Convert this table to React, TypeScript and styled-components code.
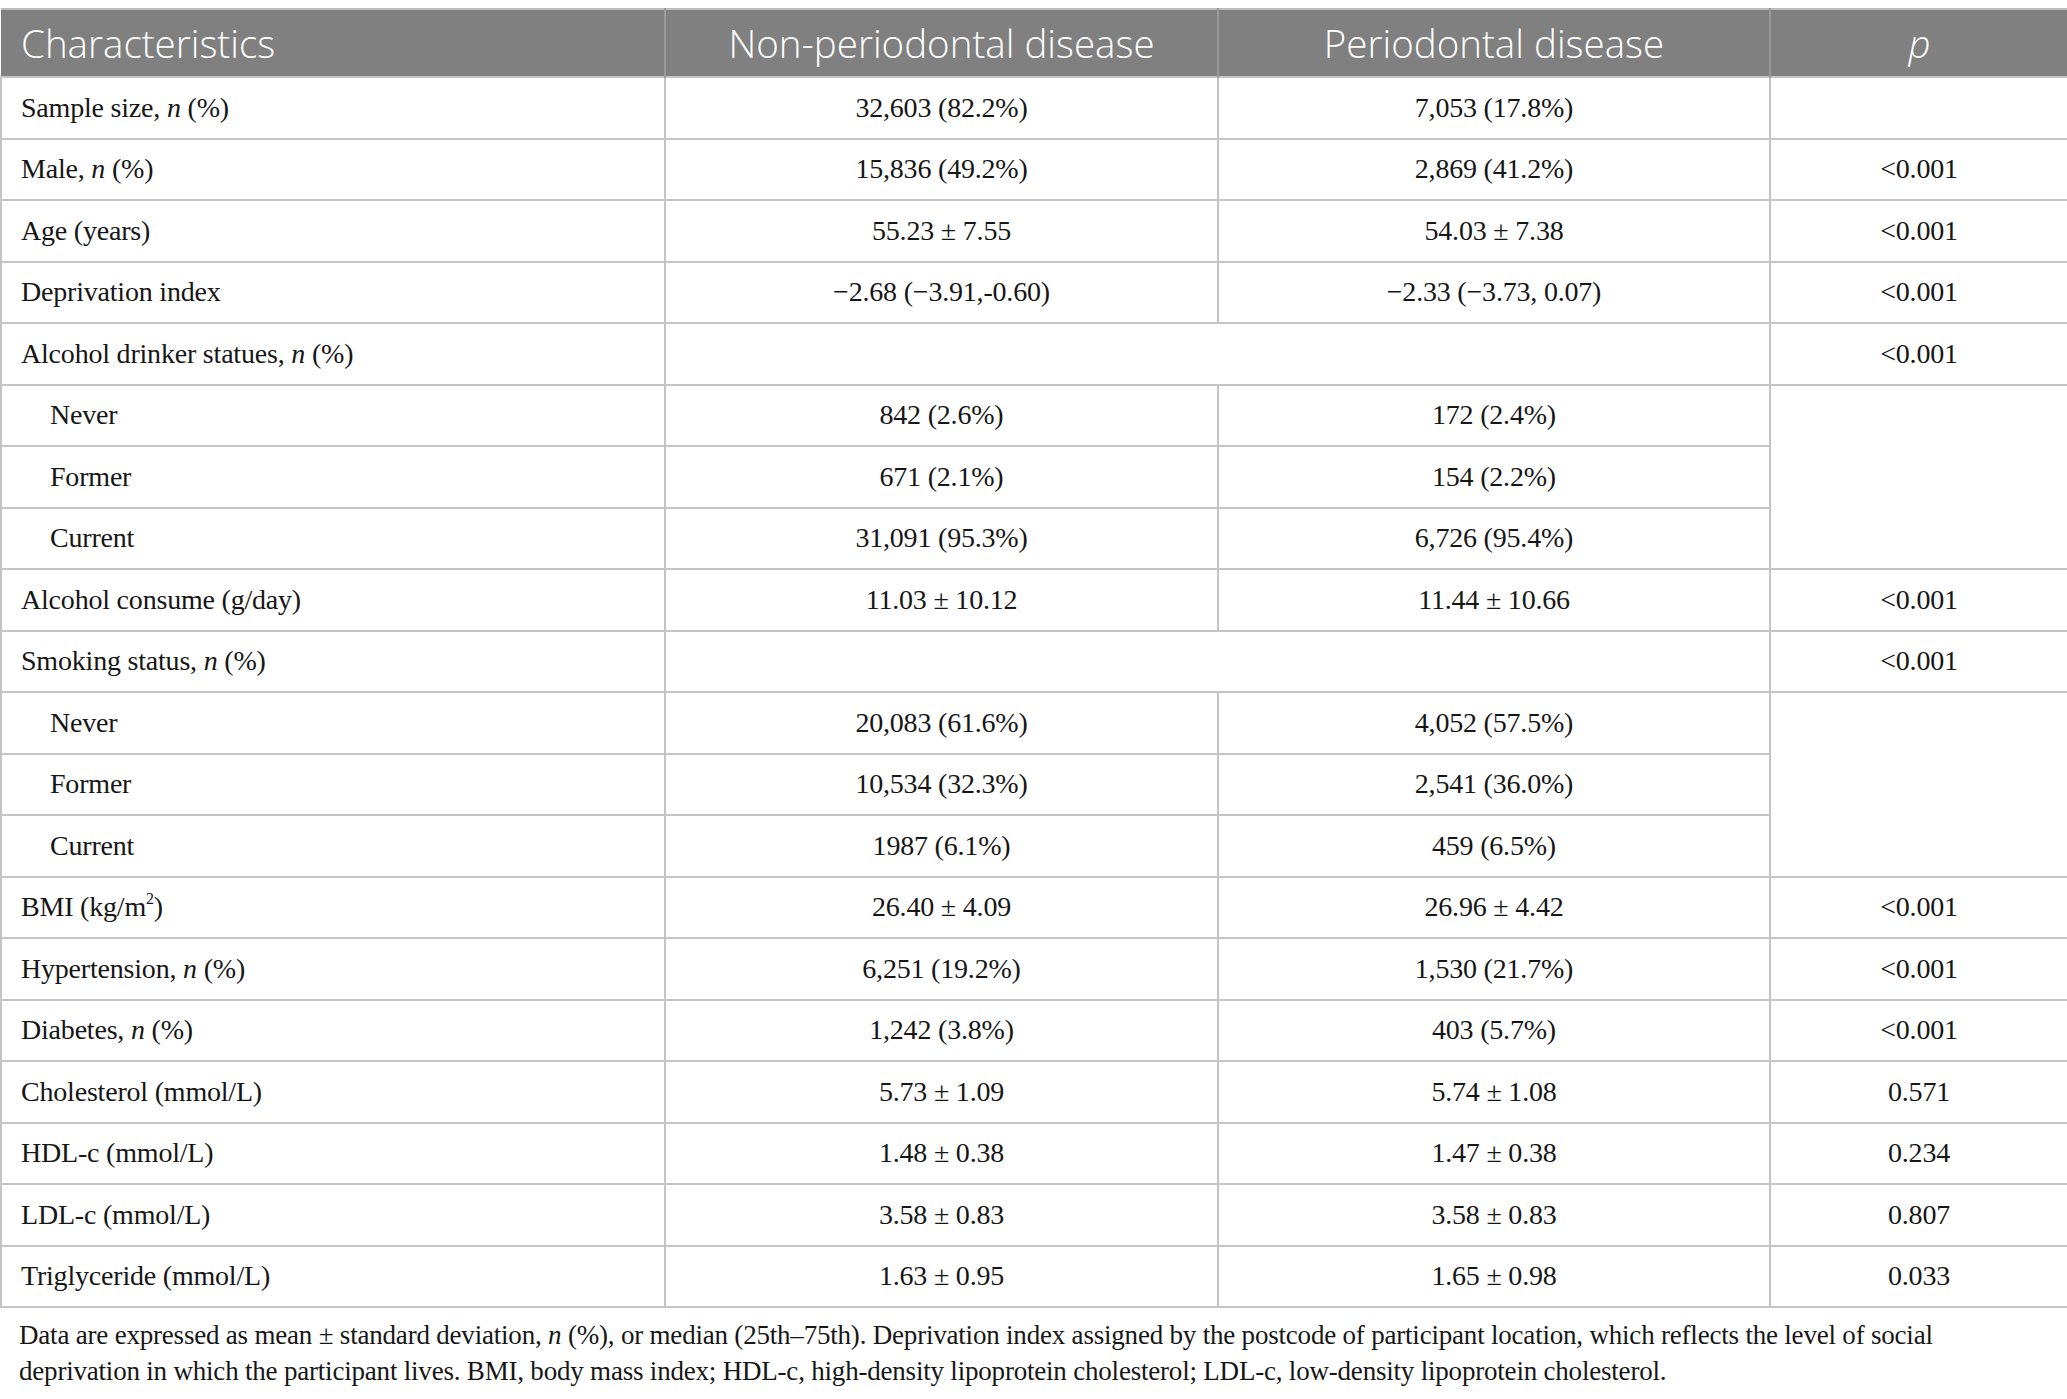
import React from 'react';
import styled, { createGlobalStyle } from 'styled-components';

const GlobalStyle = createGlobalStyle`
  html, body {
    margin: 0;
    padding: 0;
    background: #ffffff;
    overflow: hidden;
  }
`;

const Page = styled.div`
  width: 2067px;
  padding-top: 8px;
  font-family: 'Liberation Serif', 'Times New Roman', serif;
  color: #161616;
`;

const Table = styled.table`
  width: 2067px;
  border-collapse: collapse;
  table-layout: fixed;
  border-top: 2px solid #bdbdbd;
  border-bottom: 2px solid #bdbdbd;
`;

const HeadCell = styled.th<{ $align?: 'left' | 'center' }>`
  height: 66px;
  padding: 0 20px;
  background: #7f807f;
  color: #ffffff;
  font-family: 'Open Sans', 'Liberation Sans', sans-serif;
  font-weight: 300;
  font-size: 38.5px;
  text-align: ${(p) => p.$align ?? 'center'};
  border-left: 2px solid #9a9a9a;

  &:first-child {
    border-left: none;
  }
`;

const Cell = styled.td<{ $align?: 'left' | 'center'; $indent?: boolean }>`
  height: 59.5px;
  padding: 0 ${(p) => (p.$indent ? '48px' : '19px')};
  font-size: 28px;
  letter-spacing: -0.2px;
  text-align: ${(p) => p.$align ?? 'center'};
  vertical-align: middle;
  border: 2px solid #c4c4c4;
  white-space: nowrap;
`;

const Footnote = styled.p`
  margin: 9px 0 0;
  padding: 0 19px;
  font-size: 27px;
  letter-spacing: -0.2px;
  line-height: 36px;
  white-space: nowrap;
  color: #161616;
`;

const Sup = styled.sup`
  font-size: 16px;
  vertical-align: 12px;
  line-height: 0;
`;

const N = () => <i>n</i>;

type Row =
  | { kind: 'data'; label: React.ReactNode; a: string; b: string; p: string }
  | { kind: 'group'; label: React.ReactNode; p: string }
  | { kind: 'sub'; label: string; a: string; b: string; first?: boolean };

const rows: Row[] = [
  { kind: 'data', label: <>Sample size, <N /> (%)</>, a: '32,603 (82.2%)', b: '7,053 (17.8%)', p: '' },
  { kind: 'data', label: <>Male, <N /> (%)</>, a: '15,836 (49.2%)', b: '2,869 (41.2%)', p: '<0.001' },
  { kind: 'data', label: 'Age (years)', a: '55.23 ± 7.55', b: '54.03 ± 7.38', p: '<0.001' },
  { kind: 'data', label: 'Deprivation index', a: '\u22122.68 (\u22123.91,-0.60)', b: '\u22122.33 (\u22123.73, 0.07)', p: '<0.001' },
  { kind: 'group', label: <>Alcohol drinker statues, <N /> (%)</>, p: '<0.001' },
  { kind: 'sub', label: 'Never', a: '842 (2.6%)', b: '172 (2.4%)', first: true },
  { kind: 'sub', label: 'Former', a: '671 (2.1%)', b: '154 (2.2%)' },
  { kind: 'sub', label: 'Current', a: '31,091 (95.3%)', b: '6,726 (95.4%)' },
  { kind: 'data', label: 'Alcohol consume (g/day)', a: '11.03 ± 10.12', b: '11.44 ± 10.66', p: '<0.001' },
  { kind: 'group', label: <>Smoking status, <N /> (%)</>, p: '<0.001' },
  { kind: 'sub', label: 'Never', a: '20,083 (61.6%)', b: '4,052 (57.5%)', first: true },
  { kind: 'sub', label: 'Former', a: '10,534 (32.3%)', b: '2,541 (36.0%)' },
  { kind: 'sub', label: 'Current', a: '1987 (6.1%)', b: '459 (6.5%)' },
  { kind: 'data', label: <>BMI (kg/m<Sup>2</Sup>)</>, a: '26.40 ± 4.09', b: '26.96 ± 4.42', p: '<0.001' },
  { kind: 'data', label: <>Hypertension, <N /> (%)</>, a: '6,251 (19.2%)', b: '1,530 (21.7%)', p: '<0.001' },
  { kind: 'data', label: <>Diabetes, <N /> (%)</>, a: '1,242 (3.8%)', b: '403 (5.7%)', p: '<0.001' },
  { kind: 'data', label: 'Cholesterol (mmol/L)', a: '5.73 ± 1.09', b: '5.74 ± 1.08', p: '0.571' },
  { kind: 'data', label: 'HDL-c (mmol/L)', a: '1.48 ± 0.38', b: '1.47 ± 0.38', p: '0.234' },
  { kind: 'data', label: 'LDL-c (mmol/L)', a: '3.58 ± 0.83', b: '3.58 ± 0.83', p: '0.807' },
  { kind: 'data', label: 'Triglyceride (mmol/L)', a: '1.63 ± 0.95', b: '1.65 ± 0.98', p: '0.033' },
];

const App: React.FC = () => {
  return (
    <Page>
      <GlobalStyle />
      <Table>
        <colgroup>
          <col style={{ width: 664 }} />
          <col style={{ width: 553 }} />
          <col style={{ width: 552 }} />
          <col style={{ width: 298 }} />
        </colgroup>
        <thead>
          <tr>
            <HeadCell $align="left">Characteristics</HeadCell>
            <HeadCell>Non-periodontal disease</HeadCell>
            <HeadCell>Periodontal disease</HeadCell>
            <HeadCell>
              <i>p</i>
            </HeadCell>
          </tr>
        </thead>
        <tbody>
          {rows.map((row, i) => {
            if (row.kind === 'group') {
              return (
                <tr key={i}>
                  <Cell $align="left">{row.label}</Cell>
                  <Cell colSpan={2} />
                  <Cell>{row.p}</Cell>
                </tr>
              );
            }
            if (row.kind === 'sub') {
              return (
                <tr key={i}>
                  <Cell $align="left" $indent>
                    {row.label}
                  </Cell>
                  <Cell>{row.a}</Cell>
                  <Cell>{row.b}</Cell>
                  {row.first && <Cell rowSpan={3} />}
                </tr>
              );
            }
            return (
              <tr key={i}>
                <Cell $align="left">{row.label}</Cell>
                <Cell>{row.a}</Cell>
                <Cell>{row.b}</Cell>
                <Cell>{row.p}</Cell>
              </tr>
            );
          })}
        </tbody>
      </Table>
      <Footnote>
        Data are expressed as mean ± standard deviation, <N /> (%), or median (25th–75th). Deprivation index
        assigned by the postcode of participant location, which reflects the level of social
        <br />
        deprivation in which the participant lives. BMI, body mass index; HDL-c, high-density lipoprotein
        cholesterol; LDL-c, low-density lipoprotein cholesterol.
      </Footnote>
    </Page>
  );
};

export default App;
